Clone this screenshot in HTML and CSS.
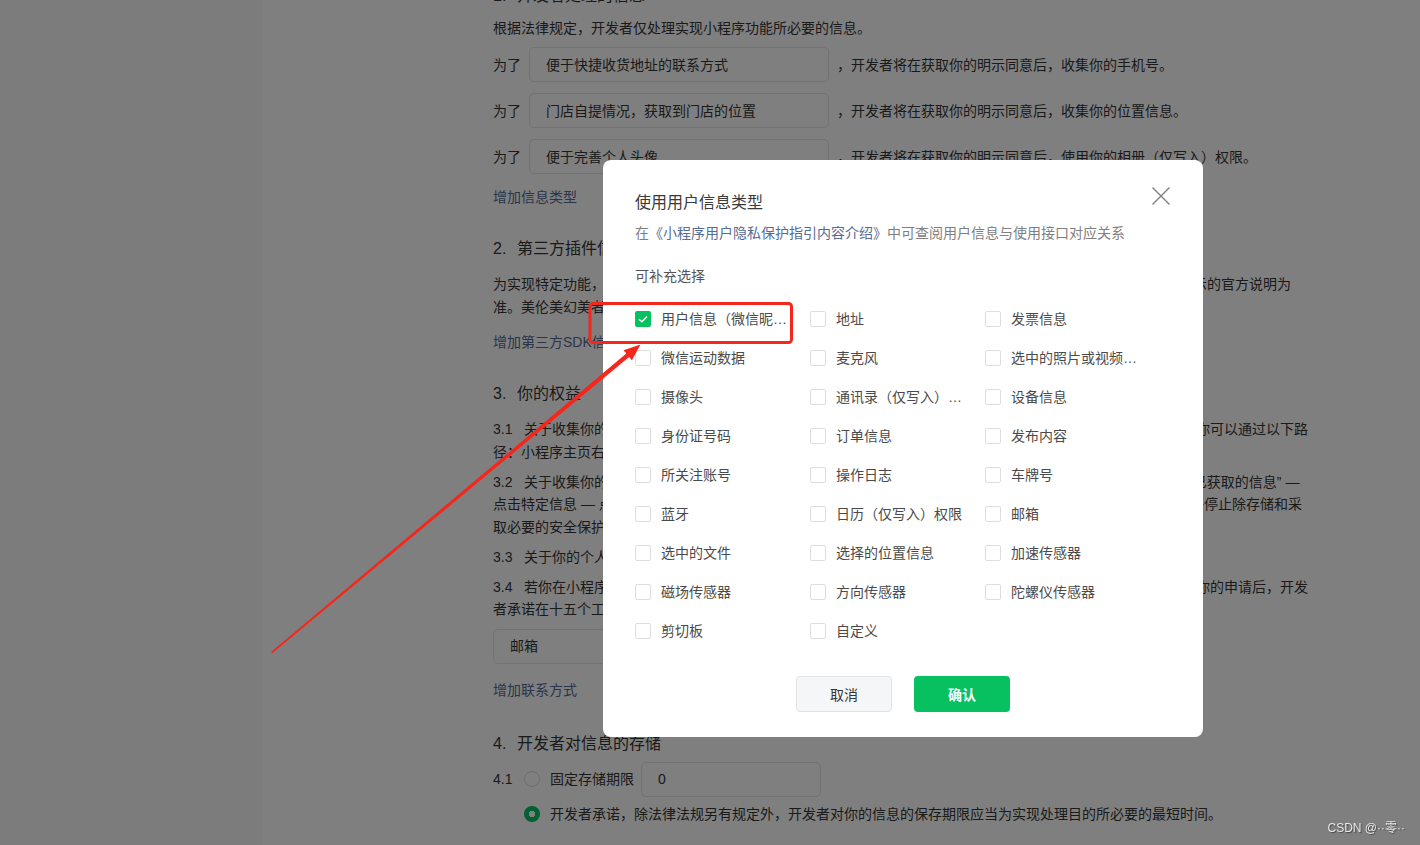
FILE: index.html
```html
<!DOCTYPE html>
<html lang="zh-CN">
<head>
<meta charset="utf-8">
<title>隐私保护指引</title>
<link rel="stylesheet" href="styles.css">
</head>
<body>
<div class="page">
  <aside class="sidebar"></aside>
  <main class="main">
    <div class="content">
      <section class="sec">
        <h3 class="sec-title"><span class="sec-num">1.</span>开发者处理的信息</h3>
        <p class="intro">根据法律规定，开发者仅处理实现小程序功能所必要的信息。</p>
        <div class="purpose-row first"><span class="purpose-label">为了</span><div class="field">便于快捷收货地址的联系方式</div><span class="purpose-text">，开发者将在获取你的明示同意后，收集你的手机号。</span></div>
        <div class="purpose-row"><span class="purpose-label">为了</span><div class="field">门店自提情况，获取到门店的位置</div><span class="purpose-text">，开发者将在获取你的明示同意后，收集你的位置信息。</span></div>
        <div class="purpose-row"><span class="purpose-label">为了</span><div class="field">便于完善个人头像</div><span class="purpose-text">，开发者将在获取你的明示同意后，使用你的相册（仅写入）权限。</span></div>
        <a class="add-link" href="#">增加信息类型</a>
      </section>

      <section class="sec">
        <h3 class="sec-title"><span class="sec-num">2.</span>第三方插件信息</h3>
        <p class="para first">为实现特定功能，开发者可能会接入由第三方提供的插件。第三方插件收集、使用个人信息的处理规则，请以其公示的官方说明为准。美伦美幻美者小程序接入的第三方插件信息如下：</p>
        <a class="add-link sdk" href="#">增加第三方SDK信息</a>
      </section>

      <section class="sec">
        <h3 class="sec-title"><span class="sec-num">3.</span>你的权益</h3>
        <p class="para first"><span class="para-num">3.1</span>关于收集你的手机号、位置信息、相册（仅写入）权限、用户信息（微信昵称、头像）、麦克风等相关信息，你可以通过以下路径：小程序主页右上角“…” — “设置” — 点击特定信息 — 点击“不允许”，撤回对开发者的授权。</p>
        <p class="para"><span class="para-num">3.2</span>关于收集你的手机号、地址、位置信息等，你可以通过以下路径：小程序主页右上角“…” — “设置” — “小程序已获取的信息” — 点击特定信息 — 点击 “通知开发者删除” ，开发者承诺收到通知后将删除信息。法律法规另有规定的，开发者承诺将停止除存储和采取必要的安全保护措施之外的处理。</p>
        <p class="para"><span class="para-num">3.3</span>关于你的个人信息，你可以通过以下方式与开发者联系，行使查阅、复制、更正、删除等法定权利。</p>
        <p class="para"><span class="para-num">3.4</span>若你在小程序中注册了账号，你可以通过以下方式与开发者联系，申请注销你在小程序中使用的账号。在受理你的申请后，开发者承诺在十五个工作日内完成核查和处理，并按照法律法规要求处理你的相关信息。</p>
        <div class="field contact">邮箱</div>
        <a class="add-link contact-link" href="#">增加联系方式</a>
      </section>

      <section class="sec sec-last">
        <h3 class="sec-title"><span class="sec-num">4.</span>开发者对信息的存储</h3>
        <div class="store-row">
          <span class="para-num">4.1</span>
          <span class="radio"></span>
          <span class="store-label">固定存储期限</span>
          <div class="field short">0</div>
        </div>
        <div class="store-row second">
          <span class="radio checked"></span>
          <span class="store-label">开发者承诺，除法律法规另有规定外，开发者对你的信息的保存期限应当为实现处理目的所必要的最短时间。</span>
        </div>
      </section>
    </div>
  </main>
</div>

<div class="mask"></div>

<div class="dialog">
  <button class="dialog-close" type="button" aria-label="关闭">
    <svg width="20" height="20" viewBox="0 0 20 20"><path d="M1.5 1.5 L18.5 18.5 M18.5 1.5 L1.5 18.5" stroke="#7f7f7f" stroke-width="1.4" fill="none"/></svg>
  </button>
  <div class="dialog-title">使用用户信息类型</div>
  <div class="dialog-desc">在<a href="#" class="desc-link">《小程序用户隐私保护指引内容介绍》</a>中可查阅用户信息与使用接口对应关系</div>
  <div class="opt-title">可补充选择</div>
  <div class="opt-grid">
    <label class="opt"><span class="check checked"><svg width="16" height="16" viewBox="0 0 16 16"><path d="M4 8.2 L6.9 10.8 L12 5.4" stroke="#fff" stroke-width="1.4" fill="none"/></svg></span><span class="opt-text">用户信息（微信昵称、头像）</span></label>
    <label class="opt"><span class="check"></span><span class="opt-text">地址</span></label>
    <label class="opt"><span class="check"></span><span class="opt-text">发票信息</span></label>
    <label class="opt"><span class="check"></span><span class="opt-text">微信运动数据</span></label>
    <label class="opt"><span class="check"></span><span class="opt-text">麦克风</span></label>
    <label class="opt"><span class="check"></span><span class="opt-text">选中的照片或视频信息</span></label>
    <label class="opt"><span class="check"></span><span class="opt-text">摄像头</span></label>
    <label class="opt"><span class="check"></span><span class="opt-text">通讯录（仅写入）权限</span></label>
    <label class="opt"><span class="check"></span><span class="opt-text">设备信息</span></label>
    <label class="opt"><span class="check"></span><span class="opt-text">身份证号码</span></label>
    <label class="opt"><span class="check"></span><span class="opt-text">订单信息</span></label>
    <label class="opt"><span class="check"></span><span class="opt-text">发布内容</span></label>
    <label class="opt"><span class="check"></span><span class="opt-text">所关注账号</span></label>
    <label class="opt"><span class="check"></span><span class="opt-text">操作日志</span></label>
    <label class="opt"><span class="check"></span><span class="opt-text">车牌号</span></label>
    <label class="opt"><span class="check"></span><span class="opt-text">蓝牙</span></label>
    <label class="opt"><span class="check"></span><span class="opt-text">日历（仅写入）权限</span></label>
    <label class="opt"><span class="check"></span><span class="opt-text">邮箱</span></label>
    <label class="opt"><span class="check"></span><span class="opt-text">选中的文件</span></label>
    <label class="opt"><span class="check"></span><span class="opt-text">选择的位置信息</span></label>
    <label class="opt"><span class="check"></span><span class="opt-text">加速传感器</span></label>
    <label class="opt"><span class="check"></span><span class="opt-text">磁场传感器</span></label>
    <label class="opt"><span class="check"></span><span class="opt-text">方向传感器</span></label>
    <label class="opt"><span class="check"></span><span class="opt-text">陀螺仪传感器</span></label>
    <label class="opt"><span class="check"></span><span class="opt-text">剪切板</span></label>
    <label class="opt"><span class="check"></span><span class="opt-text">自定义</span></label>
  </div>
  <div class="dialog-footer">
    <button class="btn btn-cancel" type="button">取消</button>
    <button class="btn btn-ok" type="button">确认</button>
  </div>
</div>

<svg class="annotation" width="1420" height="845" viewBox="0 0 1420 845">
  <rect x="590" y="303.5" width="201.5" height="39" rx="3" fill="none" stroke="#f5261b" stroke-width="3"/>
  <polygon points="271.5,652.5 272.6,653 629.1,356.9 631.9,360.2 640.5,344.5 623.5,350.3 626.3,353.6 271.6,651.4" fill="#f5261b"/>
</svg>

<div class="watermark">CSDN @··零··</div>
</body>
</html>
```

FILE: styles.css
```css
* { box-sizing: border-box; }
html, body { margin: 0; padding: 0; }
body {
  width: 1420px;
  height: 845px;
  overflow: hidden;
  background: #fff;
  font-family: "Liberation Sans", "Noto Sans CJK SC", sans-serif;
  font-size: 14px;
  line-height: 22px;
  color: #353535;
  text-spacing-trim: space-all;
}

/* ---------- background page ---------- */
.page { display: flex; height: 845px; }
.sidebar { width: 262px; flex: none; background: #f6f8f7; }
.main { flex: 1; padding-left: 231px; overflow: hidden; }
.content { width: 816px; margin-top: -16px; }

.sec { margin-top: 29px; }
.sec:first-child { margin-top: 0; }
.sec-title { margin: 0; font-size: 16px; line-height: 24px; font-weight: 400; color: #353535; }
.sec-num { display: inline-block; width: 24px; }

.intro { margin: 9px 0 0; }
.para { margin: 7.5px 0 0; line-height: 22.5px; }
.para.first { margin-top: 12px; }
.para-num { display: inline-block; width: 31px; }

.purpose-row { display: flex; align-items: center; margin-top: 11px; white-space: nowrap; }
.purpose-row.first { margin-top: 8px; }
.purpose-label { width: 28px; flex: none; }
.purpose-text { margin-left: 8px; }

.field {
  width: 300px;
  height: 35px;
  flex: none;
  display: flex;
  align-items: center;
  padding: 0 16px;
  border: 1px solid #e4e4e4;
  border-radius: 5px;
  background: #fff;
  margin-left: 8px;
}
.field.contact { margin: 8px 0 0; }
.field.short { width: 180px; margin-left: 7px; }

.add-link { display: block; margin-top: 12px; color: #576b95; text-decoration: none; }
.add-link.sdk { margin-top: 13px; }
.add-link.contact-link { margin-top: 15px; }
.sec-last { margin-top: 31px; }

.store-row { display: flex; align-items: center; margin-top: 6px; white-space: nowrap; }
.store-row.second { margin-top: 6px; padding-left: 31px; }
.radio {
  width: 16px; height: 16px; flex: none;
  border: 1px solid #dcdcdc; border-radius: 50%;
  background: #fff;
  margin-right: 10px;
}
.radio.checked { border: none; background: radial-gradient(circle, #fff 0 3px, #07c160 3.5px); }

/* ---------- mask & dialog ---------- */
.mask { position: fixed; inset: 0; background: rgba(0, 0, 0, 0.5); }

.dialog {
  position: fixed;
  left: 603px;
  top: 160px;
  width: 600px;
  background: #fff;
  border-radius: 8px;
  padding: 32px 32px 25px;
}
.dialog-close {
  position: absolute; top: 26px; right: 32px;
  width: 20px; height: 20px; padding: 0; border: none; background: none;
}
.dialog-close svg { display: block; }
.dialog-title { font-size: 16px; line-height: 22px; color: #3a3a3a; }
.dialog-desc { margin-top: 8px; color: #808080; }
.desc-link { color: #576b95; text-decoration: none; }
.opt-title { margin-top: 21px; color: #555; }

.opt-grid {
  margin-top: 21px;
  display: grid;
  grid-template-columns: repeat(3, 175px);
  grid-auto-rows: 22px;
  row-gap: 17px;
}
.opt { display: flex; align-items: center; color: #4a4a4a; }
.check {
  width: 16px; height: 16px; flex: none;
  border: 1px solid #dedede; border-radius: 2px;
  background: #fff;
  margin-right: 10px;
}
.check.checked { border: none; background: #07c160; }
.check svg { display: block; }
.opt-text { max-width: 130px; white-space: nowrap; overflow: hidden; text-overflow: ellipsis; }

.dialog-footer { display: flex; justify-content: center; gap: 22px; margin-top: 34px; }
.btn {
  width: 96px; height: 36px;
  border-radius: 4px;
  font-family: inherit; font-size: 14px;
  cursor: pointer;
}
.btn-cancel { background: #f5f6f7; border: 1px solid #e1e2e4; color: #353535; }
.btn-ok { background: #07c160; border: none; color: #fff; font-weight: 600; }

/* ---------- annotation overlay ---------- */
.annotation { position: fixed; left: 0; top: 0; pointer-events: none; }

.watermark {
  position: fixed; right: 15px; bottom: 9px;
  font-size: 12px; line-height: 16px;
  color: #e6e6e6;
  text-shadow: 1px 1px 1px rgba(0, 0, 0, 0.45);
}
```
